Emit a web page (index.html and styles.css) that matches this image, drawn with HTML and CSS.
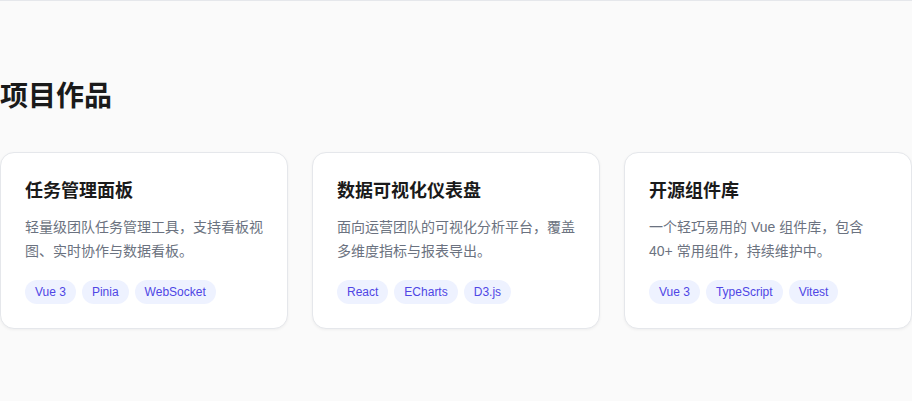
FILE: index.html
```html
<!DOCTYPE html>
<html lang="zh">
<head>
<meta charset="utf-8">
<link rel="stylesheet" href="styles.css">
</head>
<body>
<section class="projects">
  <h2 class="section-title">项目作品</h2>
  <div class="grid">
    <div class="card">
      <h3 class="card-title">任务管理面板</h3>
      <p class="card-desc">轻量级团队任务管理工具，支持看板视图、实时协作与数据看板。</p>
      <div class="tags"><span class="tag">Vue 3</span><span class="tag">Pinia</span><span class="tag">WebSocket</span></div>
    </div>
    <div class="card">
      <h3 class="card-title">数据可视化仪表盘</h3>
      <p class="card-desc">面向运营团队的可视化分析平台，覆盖多维度指标与报表导出。</p>
      <div class="tags"><span class="tag">React</span><span class="tag">ECharts</span><span class="tag">D3.js</span></div>
    </div>
    <div class="card">
      <h3 class="card-title">开源组件库</h3>
      <p class="card-desc">一个轻巧易用的 Vue 组件库，包含 40+ 常用组件，持续维护中。</p>
      <div class="tags"><span class="tag">Vue 3</span><span class="tag">TypeScript</span><span class="tag">Vitest</span></div>
    </div>
  </div>
</section>
</body>
</html>
```
FILE: styles.css
```css
html, body {
  margin: 0;
  padding: 0;
  background: #fafafa;
}
body {
  border-top: 1px solid #e5e7eb;
  font-family: "Liberation Sans", "Noto Sans CJK SC", sans-serif;
  color: #1a1a1a;
}
.projects {
  padding: 78px 0 64px;
}
.section-title {
  margin: 0 0 37px;
  font-size: 28px;
  line-height: 36px;
  font-weight: 700;
  color: #1a1a1a;
}
.grid {
  display: grid;
  grid-template-columns: repeat(3, 1fr);
  gap: 24px;
}
.card {
  background: #fff;
  border: 1px solid #e5e7eb;
  border-radius: 14px;
  padding: 24px;
  box-shadow: 0 1px 3px rgba(0, 0, 0, 0.05);
}
.card-title {
  margin: 0 0 10px;
  font-size: 18px;
  line-height: 28px;
  font-weight: 700;
  color: #1a1a1a;
}
.card-desc {
  margin: 0 0 17px;
  font-size: 14px;
  line-height: 24px;
  color: #6b7280;
}
.tags {
  display: flex;
  gap: 6px;
}
.tag {
  display: inline-block;
  height: 24px;
  line-height: 24px;
  padding: 0 10px;
  border-radius: 999px;
  background: #eef2ff;
  color: #4f46e5;
  font-size: 12px;
}
```
